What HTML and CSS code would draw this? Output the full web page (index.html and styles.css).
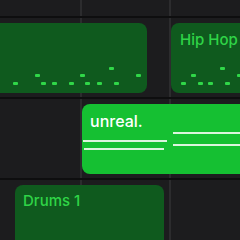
FILE: index.html
```html
<!DOCTYPE html>
<html lang="en">
<head>
    <meta charset="UTF-8">
    <title>Tracks</title>
    <link rel="stylesheet" href="styles.css">
</head>
<body>

    <div class="timeline">
        <div class="ruler"></div>

        <div class="track">
            <div class="clip clip-dark clip-a">
                <span class="note" style="left: 23px; top: 59px"></span>
                <span class="note" style="left: 45px; top: 51px"></span>
                <span class="note" style="left: 51px; top: 59px"></span>
                <span class="note" style="left: 62px; top: 59px"></span>
                <span class="note" style="left: 79px; top: 59px"></span>
                <span class="note" style="left: 90px; top: 51px"></span>
                <span class="note" style="left: 95px; top: 59px"></span>
                <span class="note" style="left: 107px; top: 59px"></span>
                <span class="note" style="left: 119px; top: 44px"></span>
                <span class="note" style="left: 124px; top: 59px"></span>
                <span class="note" style="left: 146px; top: 51px"></span>
            </div>
            <div class="clip clip-dark clip-b">
                <span class="clip-name">Hip Hop</span>
                <span class="note" style="left: 10px; top: 59px"></span>
                <span class="note" style="left: 20px; top: 51px"></span>
                <span class="note" style="left: 27px; top: 59px"></span>
                <span class="note" style="left: 37px; top: 59px"></span>
                <span class="note" style="left: 49px; top: 44px"></span>
                <span class="note" style="left: 54px; top: 59px"></span>
                <span class="note" style="left: 66px; top: 51px"></span>
            </div>
        </div>

        <div class="track">
            <div class="clip clip-bright clip-c">
                <span class="clip-name">unreal.</span>
                <span class="line" style="left: 1px; top: 36px; width: 84px"></span>
                <span class="line" style="left: 2px; top: 44px; width: 80px"></span>
                <span class="line" style="left: 91px; top: 28px; width: 80px"></span>
                <span class="line" style="left: 91px; top: 40px; width: 80px"></span>
            </div>
        </div>

        <div class="track">
            <div class="clip clip-dark clip-d">
                <span class="clip-name">Drums 1</span>
            </div>
        </div>
    </div>

</body>
</html>
```

FILE: styles.css
```css
body {
    margin: 0;
    background-color: #1c1c1e;
    font-family: Inter, "Noto Sans", sans-serif;
}

.timeline {
    width: 240px;
    height: 240px;
    overflow: hidden;
    background-color: #1c1c1e;
    background-image:
        linear-gradient(#2c2c2e, #2c2c2e),
        linear-gradient(#2c2c2e, #2c2c2e);
    background-size: 2px 100%, 2px 100%;
    background-position: 80px 0, 169px 0;
    background-repeat: no-repeat;
}

.ruler {
    height: 16px;
}

.track {
    display: flex;
    height: 81px;
    padding-top: 5px;
    box-sizing: border-box;
    border-top: 2px solid #0e0e0f;
}

.clip {
    position: relative;
    flex-shrink: 0;
    height: 70px;
    border-radius: 8px;
    box-sizing: border-box;
}

.clip-dark {
    background-color: #0f5a1e;
}

.clip-bright {
    background-color: #15c032;
}

.clip-a {
    margin-left: -10px;
    width: 157px;
}

.clip-b {
    margin-left: 24px;
    width: 90px;
}

.clip-c {
    margin-left: 82px;
    width: 180px;
}

.clip-d {
    margin-left: 15px;
    width: 149px;
}

.clip-name {
    display: block;
    padding: 6px 0 0 8px;
    font-size: 15px;
    font-weight: 500;
    line-height: 20px;
    color: #2fd447;
}

.clip-b .clip-name {
    padding: 7px 0 0 9px;
}

.clip-bright .clip-name {
    padding-top: 7px;
    font-size: 16px;
    color: #ffffff;
}

.note {
    position: absolute;
    width: 5px;
    height: 3px;
    border-radius: 1px;
    background-color: #30d748;
}

.line {
    position: absolute;
    height: 2px;
    background-color: #dcf5de;
}
```
